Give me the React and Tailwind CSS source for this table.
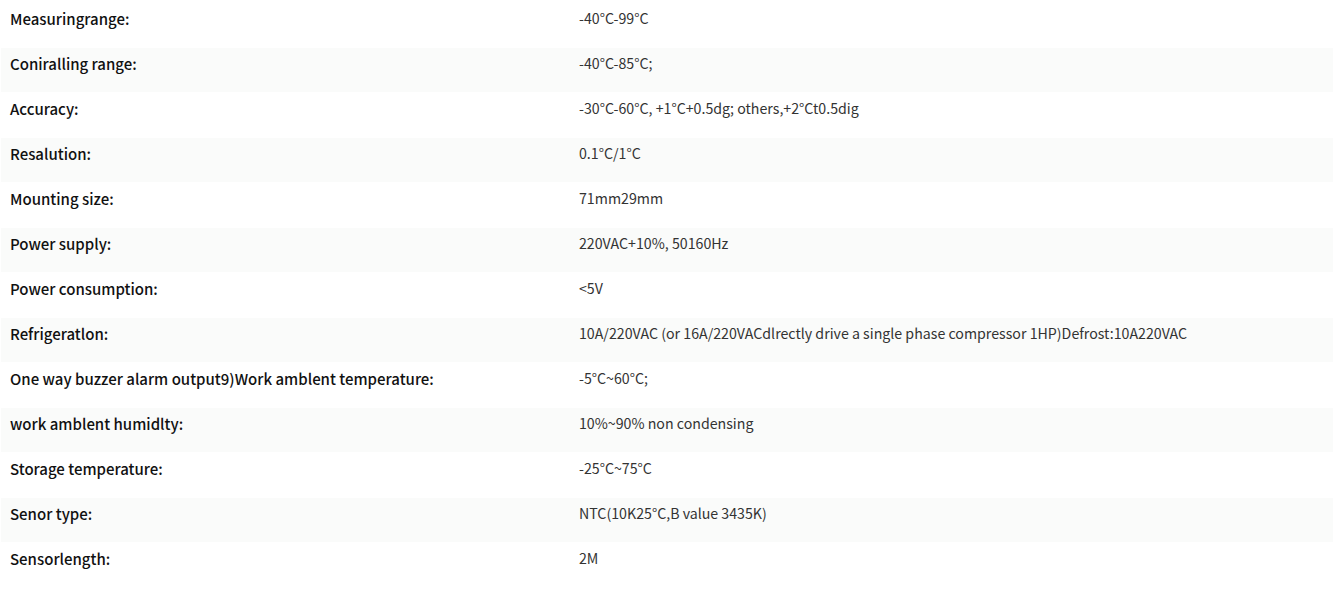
const rows = [
  ["Measuringrange:", "-40°C-99°C"],
  ["Coniralling range:", "-40°C-85°C;"],
  ["Accuracy:", "-30°C-60°C, +1°C+0.5dg; others,+2°Ct0.5dig"],
  ["Resalution:", "0.1°C/1°C"],
  ["Mounting size:", "71mm29mm"],
  ["Power supply:", "220VAC+10%, 50160Hz"],
  ["Power consumption:", "<5V"],
  ["Refrigeratlon:", "10A/220VAC (or 16A/220VACdlrectly drive a single phase compressor 1HP)Defrost:10A220VAC"],
  ["One way buzzer alarm output9)Work amblent temperature:", "-5°C~60°C;"],
  ["work amblent humidlty:", "10%~90% non condensing"],
  ["Storage temperature:", "-25°C~75°C"],
  ["Senor type:", "NTC(10K25°C,B value 3435K)"],
  ["Sensorlength:", "2M"],
];

export default function App() {
  return (
    <div
      className="w-[1334px] h-[591px] bg-white flex flex-col gap-[1px] pt-[3px] px-[1px] overflow-hidden"
      style={{ fontFamily: '"Noto Sans CJK SC", "Noto Sans", sans-serif' }}
    >
      {rows.map(([k, v], i) => (
        <div
          key={i}
          className={`flex h-[44px] shrink-0 leading-[21px] ${i % 2 === 1 ? "bg-[#fafbfa]" : "bg-white"}`}
        >
          <div className="w-[568px] shrink-0 pl-[9px] pt-[5px] text-[15px] font-medium text-[#111111]">{k}</div>
          <div className="flex-1 min-w-0 pl-[10px] pt-[5px] text-[14.2px] text-[#333333]">{v}</div>
        </div>
      ))}
    </div>
  );
}
